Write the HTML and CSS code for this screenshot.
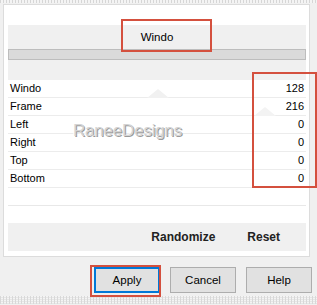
FILE: index.html
```html
<!DOCTYPE html>
<html lang="en">
<head>
    <meta charset="UTF-8">
    <meta name="viewport" content="width=device-width, initial-scale=1.0">
    <title>Windo</title>
    <link rel="stylesheet" href="styles.css">
</head>
<body>
    <div class="dots"></div>

    <div class="panel">
        <div class="header">
            <div class="title">Windo</div>
            <div class="track"></div>
        </div>

        <div class="rows">
            <div class="row"><span>Windo</span><span>128</span></div>
            <div class="row"><span>Frame</span><span>216</span></div>
            <div class="row"><span>Left</span><span>0</span></div>
            <div class="row"><span>Right</span><span>0</span></div>
            <div class="row"><span>Top</span><span>0</span></div>
            <div class="row"><span>Bottom</span><span>0</span></div>
        </div>

        <div class="spacer"></div>

        <div class="tools">
            <button class="tool tool-random">Randomize</button>
            <button class="tool tool-reset">Reset</button>
        </div>

        <div class="ghost ghost-1"></div>
        <div class="ghost ghost-2"></div>
        <div class="watermark">RaneeDesigns</div>
    </div>

    <div class="buttons">
        <button class="button default">Apply</button>
        <button class="button">Cancel</button>
        <button class="button">Help</button>
    </div>

    <div class="dots dots-bottom"></div>

    <div class="mark mark-title"></div>
    <div class="mark mark-values"></div>
    <div class="mark mark-apply"></div>
</body>
</html>
```

FILE: styles.css
```css
body {
    margin: 0;
    padding: 0;
    width: 317px;
    height: 305px;
    overflow: hidden;
    background-color: #f0f0f0;
    font-family: "Liberation Sans", Arial, sans-serif;
    font-size: 11px;
    color: #000;
    position: relative;
}

.dots {
    height: 3px;
    background-color: #f4f4f4;
    background-image: repeating-linear-gradient(90deg, #d6d6d6 0 1px, transparent 1px 3px);
}

.dots-bottom {
    height: 8px;
    margin-top: 3px;
    background-image:
        repeating-linear-gradient(90deg, #d8d8d8 0 1px, transparent 1px 3px),
        repeating-linear-gradient(0deg, #e6e6e6 0 1px, transparent 1px 2px);
}

.panel {
    position: relative;
    margin: 1px 0 0 3px;
    width: 307px;
    height: 253px;
    background-color: #fff;
    border: 1px solid #dcdcdc;
    padding: 20px 3px 0 4px;
    box-sizing: border-box;
}

.header {
    background-color: #f0f0f0;
    height: 55px;
}

.title {
    height: 24px;
    line-height: 24px;
    text-align: center;
    font-size: 11.5px;
}

.track {
    height: 11px;
    background-color: #dadada;
    border: 1px solid #bdbdbd;
    box-sizing: border-box;
}

.rows {
    display: flex;
    flex-direction: column;
}

.row {
    display: flex;
    justify-content: space-between;
    height: 18px;
    line-height: 17px;
    padding: 0 2px;
    border-bottom: 1px solid #ececec;
    box-sizing: border-box;
}

.spacer {
    height: 17px;
    border-bottom: 1px solid #e8e8e8;
    margin-bottom: 17px;
}

.tools {
    display: flex;
    justify-content: flex-end;
    gap: 8px;
    height: 28px;
    background-color: #f0f0f0;
    padding-right: 14px;
}

.tool {
    border: none;
    background: none;
    font-family: "Liberation Sans", Arial, sans-serif;
    font-size: 12px;
    font-weight: bold;
    color: #222;
    padding: 0 12px;
    height: 28px;
}

.ghost {
    position: absolute;
    width: 0;
    height: 0;
    border-left: 11px solid transparent;
    border-right: 11px solid transparent;
    border-bottom: 9px solid #f1f1f1;
}

.ghost-1 {
    left: 143px;
    top: 84px;
}

.ghost-2 {
    left: 250px;
    top: 102px;
    border-bottom-color: #f3f3f3;
}

.watermark {
    position: absolute;
    left: 69px;
    top: 116px;
    font-size: 17px;
    color: #d4d4d4;
    text-shadow: 1px 1px 0 #9a9a9a, -1px 0 0 #fff;
    letter-spacing: -0.2px;
}

.buttons {
    display: flex;
    justify-content: flex-end;
    gap: 10px;
    padding: 10px 5px 0 0;
}

.button {
    width: 66px;
    height: 26px;
    background-color: #e1e1e1;
    border: 1px solid #adadad;
    font-family: "Liberation Sans", Arial, sans-serif;
    font-size: 11.5px;
    color: #000;
    padding: 0;
}

.button.default {
    border: 2px solid #0078d7;
}

.mark {
    position: absolute;
    border: 2px solid #d4503e;
    box-sizing: border-box;
}

.mark-title {
    left: 121px;
    top: 19px;
    width: 91px;
    height: 33px;
}

.mark-values {
    left: 252px;
    top: 72px;
    width: 65px;
    height: 116px;
}

.mark-apply {
    left: 90px;
    top: 265px;
    width: 71px;
    height: 32px;
}
```
